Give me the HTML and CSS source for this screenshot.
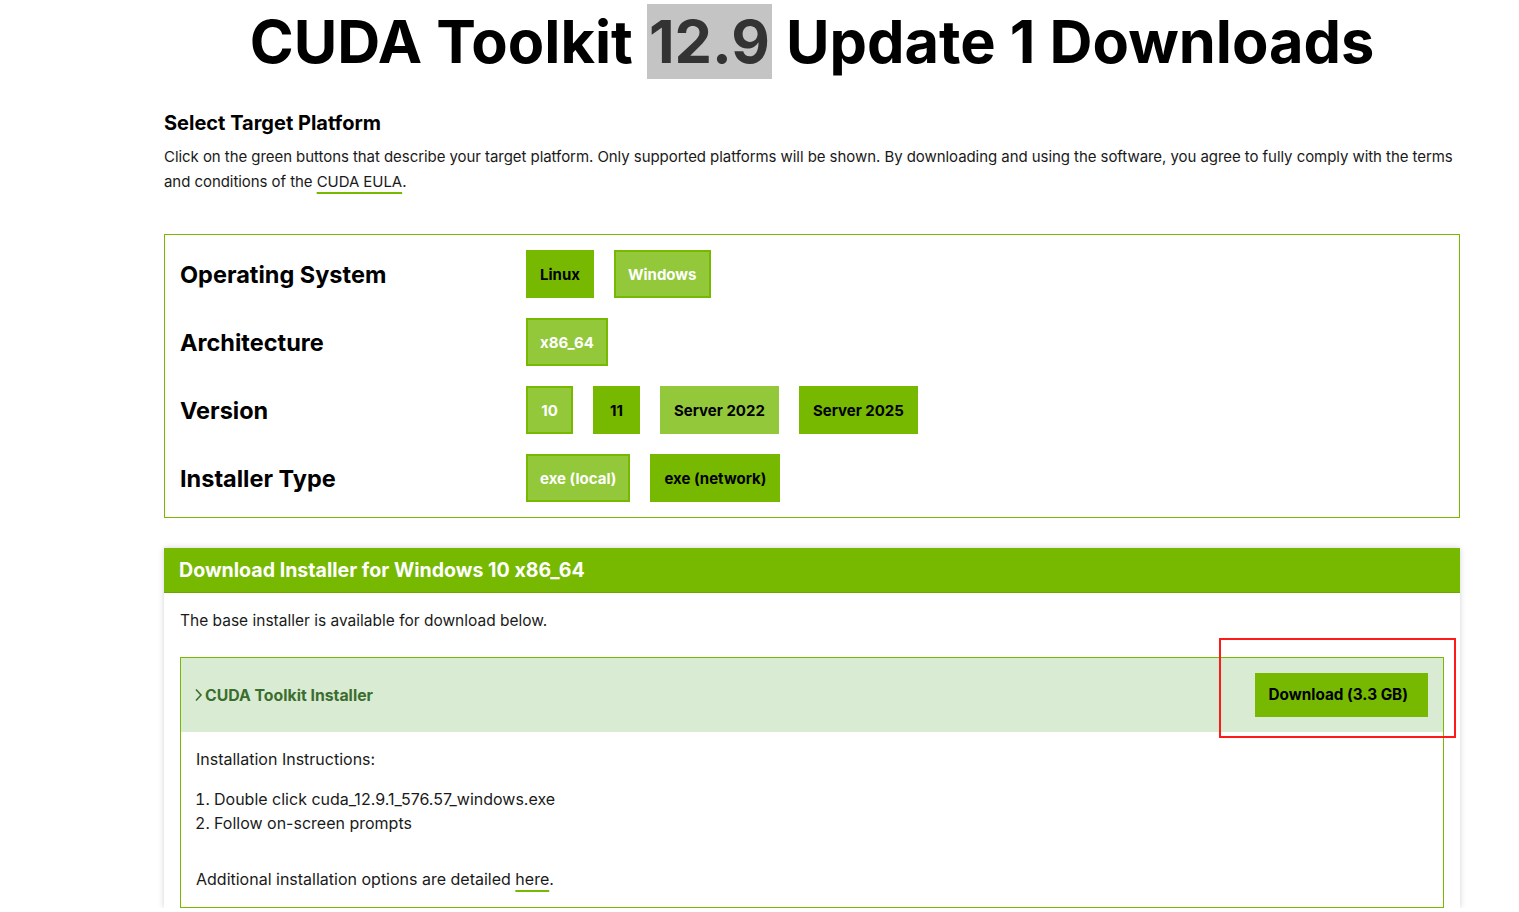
FILE: index.html
```html
<!DOCTYPE html>
<html lang="en">
<head>
  <meta charset="UTF-8">
  <meta name="viewport" content="width=device-width, initial-scale=1.0">
  <title>CUDA Toolkit 12.9 Update 1 Downloads</title>
  <link rel="stylesheet" href="styles.css">
</head>
<body>
  <div class="container">
    <h1 class="page-title">CUDA Toolkit <span class="version-mark">12.9</span> Update 1 Downloads</h1>

    <h2 class="section-title">Select Target Platform</h2>
    <p class="intro">Click on the green buttons that describe your target platform. Only supported platforms will be shown. By downloading and using the software, you agree to fully comply with the terms and conditions of the <a href="#" class="green-link">CUDA EULA</a>.</p>

    <div class="selector">
      <div class="selector-row">
        <div class="selector-label">Operating System</div>
        <div class="selector-options">
          <button class="opt">Linux</button>
          <button class="opt active">Windows</button>
        </div>
      </div>
      <div class="selector-row">
        <div class="selector-label">Architecture</div>
        <div class="selector-options">
          <button class="opt active">x86_64</button>
        </div>
      </div>
      <div class="selector-row">
        <div class="selector-label">Version</div>
        <div class="selector-options">
          <button class="opt active">10</button>
          <button class="opt">11</button>
          <button class="opt hover">Server 2022</button>
          <button class="opt">Server 2025</button>
        </div>
      </div>
      <div class="selector-row">
        <div class="selector-label">Installer Type</div>
        <div class="selector-options">
          <button class="opt active">exe (local)</button>
          <button class="opt">exe (network)</button>
        </div>
      </div>
    </div>

    <div class="download-panel">
      <div class="panel-header">Download Installer for Windows 10 x86_64</div>
      <div class="panel-body">
        <p class="panel-note">The base installer is available for download below.</p>

        <div class="installer">
          <div class="installer-head">
            <span class="installer-name">
              <svg class="chevron" width="9" height="14" viewBox="0 0 9 14"><polyline points="2,1.5 7,7 2,12.5" fill="none" stroke="#3b6e2e" stroke-width="1.6"/></svg>CUDA Toolkit Installer
            </span>
            <div class="download-wrap">
              <a href="#" class="download-btn">Download (3.3 GB)</a>
              <div class="highlight-box"></div>
            </div>
          </div>
          <div class="installer-body">
            <p>Installation Instructions:</p>
            <ol class="steps">
              <li>Double click cuda_12.9.1_576.57_windows.exe</li>
              <li>Follow on-screen prompts</li>
            </ol>
            <p class="more">Additional installation options are detailed <a href="#" class="green-link">here</a>.</p>
          </div>
        </div>
      </div>
    </div>
  </div>
</body>
</html>
```

FILE: styles.css
```css
body {
  font-family: Inter, "Liberation Sans", sans-serif;
  font-feature-settings: "calt" 0;
  background-color: #fff;
  color: #1a1a1a;
  margin: 0;
}

.container {
  width: 1296px;
  margin: 0 0 0 164px;
}

.page-title {
  text-align: center;
  font-size: 59.5px;
  font-weight: 700;
  color: #000;
  margin: 0;
  padding-top: 4px;
  line-height: 75px;
}

.version-mark {
  display: inline-block;
  background-color: #c4c4c4;
  color: #333;
  padding: 0 2px;
}

.section-title {
  font-size: 20px;
  font-weight: 700;
  color: #000;
  margin: 31px 0 0;
  line-height: 26px;
}

.intro {
  font-size: 15px;
  letter-spacing: -0.06px;
  line-height: 25px;
  margin: 8px 0 0;
  color: #1a1a1a;
}

.green-link {
  color: #1a1a1a;
  text-decoration: underline;
  text-decoration-color: #76b900;
  text-decoration-thickness: 2px;
  text-underline-offset: 5px;
}

.selector {
  margin-top: 40px;
  border: 1px solid #76b900;
  padding: 15px;
  display: flex;
  flex-direction: column;
  gap: 20px;
}

.selector-row {
  display: flex;
  align-items: center;
  height: 48px;
}

.selector-label {
  width: 346px;
  font-size: 23.5px;
  font-weight: 700;
  color: #000;
}

.selector-options {
  display: flex;
  gap: 20px;
}

.opt {
  height: 48px;
  min-width: 47px;
  padding: 0 12px;
  border: 2px solid #76b900;
  background-color: #76b900;
  color: #000;
  font-family: Inter, "Liberation Sans", sans-serif;
  font-feature-settings: "calt" 0;
  font-size: 15px;
  font-weight: 700;
  cursor: pointer;
}

.opt.active {
  background-color: #93c83a;
  color: #fff;
}

.opt.hover {
  background-color: #93c83a;
  border-color: #93c83a;
}

.download-panel {
  margin-top: 30px;
  box-shadow: 0 0 6px rgba(0, 0, 0, 0.18);
}

.panel-header {
  background-color: #76b900;
  color: #fff;
  font-size: 19.6px;
  font-weight: 700;
  height: 44px;
  line-height: 44px;
  padding-left: 15px;
  border-bottom: 1px solid #6aa600;
}

.panel-body {
  padding: 16px 16px 0;
}

.panel-note {
  font-size: 15.5px;
  margin: 0;
  line-height: 24px;
}

.installer {
  margin-top: 24px;
  border: 1px solid #76b900;
}

.installer-head {
  background-color: #d9ebd3;
  height: 74px;
  display: flex;
  align-items: center;
  justify-content: space-between;
  padding: 0 15px 0 13px;
}

.installer-name {
  display: flex;
  align-items: center;
  color: #3b6e2e;
  font-size: 15.8px;
  font-weight: 700;
}

.chevron {
  margin-right: 2px;
}

.download-wrap {
  position: relative;
}

.download-btn {
  display: block;
  background-color: #76b900;
  color: #000;
  font-size: 15.3px;
  font-weight: 700;
  text-decoration: none;
  height: 44px;
  line-height: 44px;
  padding: 0 20px 0 13px;
}

.highlight-box {
  position: absolute;
  left: -36px;
  right: -28px;
  top: -35px;
  bottom: -21px;
  border: 2px solid #ff1a1a;
}

.installer-body {
  padding: 15px 15px 16px;
  font-size: 16px;
}

.installer-body p {
  margin: 0;
  line-height: 24px;
}

.steps {
  margin: 16px 0 0;
  padding-left: 18px;
  line-height: 24px;
}

.installer-body .more {
  margin-top: 32px;
}
```
